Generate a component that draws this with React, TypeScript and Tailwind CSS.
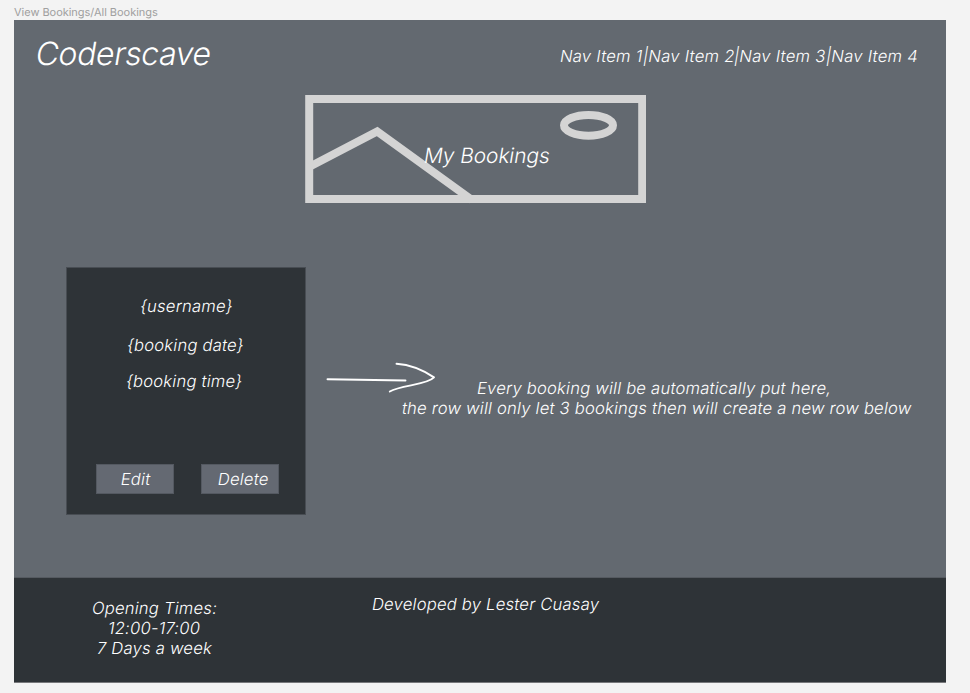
import type { ReactNode } from "react";

const navItems = ["Nav Item 1", "Nav Item 2", "Nav Item 3", "Nav Item 4"];

function Slanted({ children }: { children: ReactNode }) {
  return <span className="inline-block origin-center -skew-x-[9.4deg] whitespace-nowrap align-top">{children}</span>;
}

function Header() {
  return (
    <header className="flex h-[75px] items-start justify-between pl-[22px] pr-[28px]">
      <h1 className="mt-[14px] text-[32px] leading-[40px] tracking-[-0.4px]">
        <Slanted>Coderscave</Slanted>
      </h1>
      <nav className="mt-[27px] flex tracking-[0.25px]">
        {navItems.map((item, i) => (
          <Slanted key={item}>{i > 0 ? "|" + item : item}</Slanted>
        ))}
      </nav>
    </header>
  );
}

function Banner() {
  return (
    <section className="relative ml-[291px] h-[108px] w-[341px]">
      <svg className="block" width="341" height="110" viewBox="0 0 341 110" fill="none" stroke="#d4d4d4" strokeWidth="8">
        <rect x="4.2" y="4" width="333" height="100" />
        <path d="M5 71.5L72.2 36.4L167 105" />
        <ellipse cx="283.5" cy="30.3" rx="24.5" ry="10.4" />
      </svg>
      <h2 className="absolute left-[119px] top-[49px] text-[21px] leading-[26px] tracking-[-0.12px]">
        <Slanted>My Bookings</Slanted>
      </h2>
    </section>
  );
}

function BookingCard() {
  return (
    <article className="flex h-[248px] w-[240px] shrink-0 flex-col border border-[#484d53] bg-[#2e3337]">
      <div className="mt-[29px] pl-[73px]"><Slanted>{"{username}"}</Slanted></div>
      <div className="mt-[19px] pl-[60px]"><Slanted>{"{booking date}"}</Slanted></div>
      <div className="mt-[16px] pl-[59px]"><Slanted>{"{booking time}"}</Slanted></div>
      <div className="mt-[72px] flex gap-[27px] pl-[29px]">
        <button className="h-[30px] w-[78px] border border-[#545961] bg-[#646972] pl-[2px] tracking-[0.23px]"><Slanted>Edit</Slanted></button>
        <button className="h-[30px] w-[78px] border border-[#545961] bg-[#646972] pl-[6px] tracking-[0.23px]"><Slanted>Delete</Slanted></button>
      </div>
    </article>
  );
}

function Arrow() {
  return (
    <svg className="ml-[20px] mt-[93px] block shrink-0" width="110" height="34" viewBox="326 360 110 34" fill="none" stroke="#fff" strokeWidth="1.9" strokeLinecap="round" strokeLinejoin="round">
      <path d="M327.5 379.2L405.5 380.5" />
      <path d="M396.5 363.8C411 364.8 423 370 434 377.4C427 385 401 385 389.8 391.5" />
    </svg>
  );
}

function Footer() {
  return (
    <footer className="flex h-[106px] items-start border-y border-t-[#555a60] border-b-[#77787b] bg-[#2e3337]">
      <div className="ml-[77px] mt-[21px] w-[127px] text-center">
        <p><Slanted>Opening Times:</Slanted></p>
        <p><Slanted>12:00-17:00</Slanted></p>
        <p><Slanted>7 Days a week</Slanted></p>
      </div>
      <p className="ml-[154px] mt-[17px]"><Slanted>Developed by Lester Cuasay</Slanted></p>
    </footer>
  );
}

export default function App() {
  return (
    <div className="h-[693px] w-[970px] overflow-hidden bg-[#f3f3f3] font-['Inter',sans-serif] [font-optical-sizing:none] [text-rendering:geometricPrecision]">
      <div className="h-[20px] pl-[14px] pt-[5px] text-[11px] leading-[15px] tracking-[-0.03px] text-[#a0a0a0]">View Bookings/All Bookings</div>
      <main className="ml-[14px] h-[663px] w-[932px] bg-[#636970] text-[16.6px] font-[350] leading-5 tracking-[0.22px] text-white">
        <Header />
        <Banner />
        <section className="ml-[52px] mt-[64px] flex h-[310px] items-start">
          <BookingCard />
          <Arrow />
          <div className="-ml-[36px] mt-[112px] w-[513px] whitespace-nowrap text-center">
            <p className="pr-[5px]"><Slanted>Every booking will be automatically put here,</Slanted></p>
            <p><Slanted>the row will only let 3 bookings then will create a new row below</Slanted></p>
          </div>
        </section>
        <Footer />
      </main>
    </div>
  );
}
